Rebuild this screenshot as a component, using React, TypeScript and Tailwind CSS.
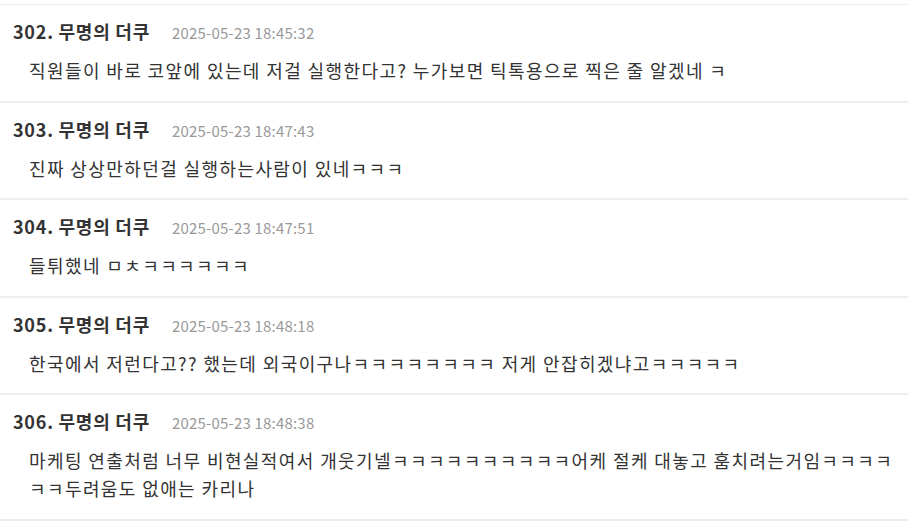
const comments = [
  {
    no: 302,
    date: '2025-05-23 18:45:32',
    body: '직원들이 바로 코앞에 있는데 저걸 실행한다고? 누가보면 틱톡용으로 찍은 줄 알겠네 ㅋ',
  },
  { no: 303, date: '2025-05-23 18:47:43', body: '진짜 상상만하던걸 실행하는사람이 있네ㅋㅋㅋ' },
  { no: 304, date: '2025-05-23 18:47:51', body: '들튀했네 ㅁㅊㅋㅋㅋㅋㅋㅋ' },
  {
    no: 305,
    date: '2025-05-23 18:48:18',
    body: '한국에서 저런다고?? 했는데 외국이구나ㅋㅋㅋㅋㅋㅋㅋㅋ 저게 안잡히겠냐고ㅋㅋㅋㅋㅋ',
  },
  {
    no: 306,
    date: '2025-05-23 18:48:38',
    body: '마케팅 연출처럼 너무 비현실적여서 개웃기넬ㅋㅋㅋㅋㅋㅋㅋㅋㅋㅋ어케 절케 대놓고 훔치려는거임ㅋㅋㅋㅋㅋㅋ두려움도 없애는 카리나',
  },
]

function Comment({ no, date, body }: { no: number; date: string; body: string }) {
  return (
    <li className="border-b-2 border-[#eeeeee] pl-[13px] pr-3 pt-[15px] pb-[16.5px]">
      <div className="flex items-baseline gap-[22px] leading-[22px]">
        <span className="text-[18px] font-bold tracking-[0.75px] text-[#333333]">{no}. 무명의 더쿠</span>
        <span className="text-[15px] tracking-[0.2px] text-[#999999]">{date}</span>
      </div>
      <p className="mt-[12px] pl-4 text-[18px] leading-[28px] tracking-[1.4px] text-[#333333] break-all">
        {body}
      </p>
    </li>
  )
}

export default function App() {
  return (
    <div
      className="w-[908px] h-[522px] overflow-hidden bg-white pt-1"
      style={{ fontFamily: '"Noto Sans CJK KR", "Noto Sans", sans-serif' }}
    >
      <ul className="border-t border-[#eeeeee]">
        {comments.map((c) => (
          <Comment key={c.no} {...c} />
        ))}
      </ul>
    </div>
  )
}
